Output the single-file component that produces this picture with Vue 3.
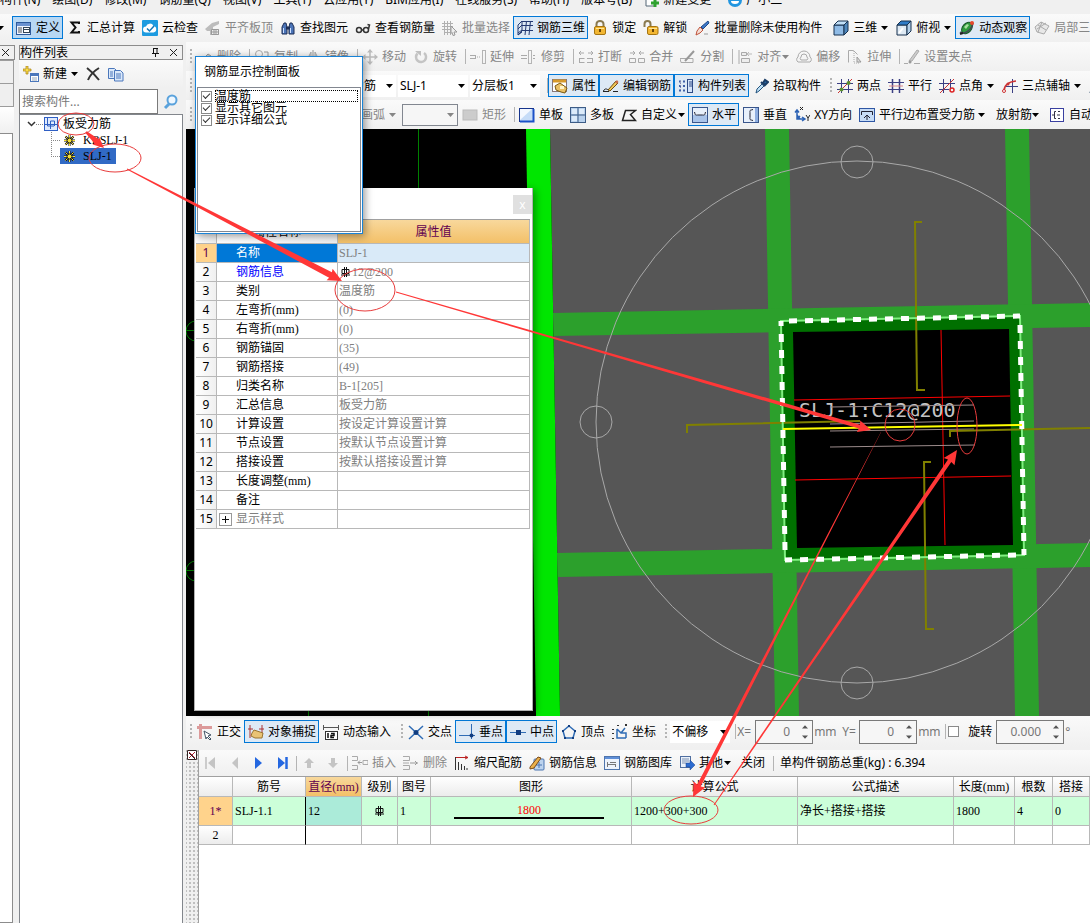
<script setup>
import { h } from 'vue'

const arrowSvg = () => h('svg', { class: 'caret', viewBox: '0 0 7 4' }, [h('path', { d: 'M0 0h7L3.5 4z' })])

const icons = {
  define: '<rect x=".5" y="2.500" width="14" height="12" fill="#eef4ff" stroke="#2d5a9c"/><path d="M1 4.500h13" stroke="#6a92d0" stroke-width="3"/><path d="M2 8h4M2 10h4M2 12h4" stroke="#555"/><rect x="7.500" y="7.500" width="6" height="5" fill="#fff" stroke="#345"/><path d="M8 9.500h5" stroke="#345"/>',
  sigma: '<path d="M12 4V2.500H4.500l4 5-4 5H12V11" fill="none" stroke="#111" stroke-width="2"/>',
  cloud: '<rect width="16" height="16" rx="1" fill="#1d9be0"/><path d="M4 12.500a3 3 0 0 1 0-6 4 4 0 0 1 7.500-.5 3.300 3.300 0 0 1 0 6.500z" fill="#fff"/><path d="M5 8.500l2.500 2.500L12 6" fill="none" stroke="#1577b8" stroke-width="1.500"/>',
  level: '<path d="M0 9l7-6 7-2v3L8 7v2h6v6H5v-4H2z" fill="#bcbcbc"/><path d="M6.500 9.500h7v5h-7zM9 10v5M11 10v5M7 12h6" fill="#eee" stroke="#999"/>',
  find: '<path d="M2 14V7l2-4h2l1 4v7zM9 14V7l1-4h2l2 4v7z" fill="#4b74b8" stroke="#1f2f55"/><path d="M6 8h4" stroke="#1f2f55" stroke-width="3"/><path d="M3.500 8v5M10.500 8v5" stroke="#cfe0ff"/>',
  glasses: '<circle cx="4" cy="10" r="2.500" fill="none" stroke="#333" stroke-width="1.500"/><circle cx="11" cy="10" r="2.500" fill="none" stroke="#333" stroke-width="1.500"/><path d="M6.500 10h2M13.500 9l1-4-2-.5" fill="none" stroke="#333" stroke-width="1.500"/>',
  batch: '<path d="M2.500 1v14M5.500 1v14M8.500 1v14M0 3.500h11M0 6.500h11M0 9.500h9M2 12.500h6" stroke="#b0b0b0"/><path d="M9 6l6 6h-3l1 3-2 .5-1-3-1 1z" fill="#eee" stroke="#999"/>',
  rebar3d: '<path d="M1 15V5l4-4v10zM1 9l4-4M5 1.500h11M5 5.500h11M5 10.500h11M1 13l4-3M9.500 1L8 15M13.500 1L12 15M1 15l4-3" fill="none" stroke="#243a72"/>',
  lock: '<path d="M4.500 7V4a3.500 3 0 0 1 7 0v3" fill="none" stroke="#8a7a50" stroke-width="2"/><rect x="2.500" y="6.500" width="11" height="8" rx="1.500" fill="#f2b632" stroke="#a67512"/><path d="M4 8.500h8" stroke="#ffe79a"/><path d="M8 9v3" stroke="#6a4508" stroke-width="2"/>',
  unlock: '<path d="M1.500 7V4a3 3 0 0 1 6 0v3" fill="none" stroke="#8a7a50" stroke-width="2"/><rect x="4.500" y="6.500" width="10.500" height="8" rx="1.500" fill="#f2b632" stroke="#a67512"/><path d="M6 8.500h8" stroke="#ffe79a"/><path d="M10 9v3" stroke="#6a4508" stroke-width="2"/>',
  brush: '<path d="M14 1L7 7l2 2 6-6z" fill="#3c78c8" stroke="#1f4b8a"/><path d="M6 7l3 3-3 3-4 2 1-4z" fill="#f4ddd4" stroke="#c0533a"/><path d="M10 14h4" stroke="#999"/>',
  cube: '<path d="M1 5h10v10H1z" fill="#8fbbe6" stroke="#16304e"/><path d="M1 5l4-4h10l-4 4z" fill="#c2e0f8" stroke="#16304e"/><path d="M11 5l4-4v10l-4 4z" fill="#4f86bb" stroke="#16304e"/>',
  cubeTop: '<path d="M1 5h10v10H1z" fill="#dfeaf4" stroke="#16304e"/><path d="M1 5l4-4h10l-4 4z" fill="#2f7cc8" stroke="#16304e"/><path d="M11 5l4-4v10l-4 4z" fill="#b4d0ea" stroke="#16304e"/><path d="M3 13l4-5" stroke="#fff" stroke-width="2"/>',
  orbit: '<ellipse cx="8" cy="8" rx="4.500" ry="6.500" transform="rotate(40 8 8)" fill="#2e9a3e" stroke="#17552a"/><path d="M5 7l3-3 2 1-3 4z" fill="#a7e0a0"/><path d="M1 12c4 3 12-2 13-9" fill="none" stroke="#445" stroke-width="1.500"/><circle cx="13" cy="3" r="2" fill="#e7482e"/><path d="M1 14l3-1" stroke="#222" stroke-width="2"/>',
  local: '<path d="M1 7l6-5 8 4-5 8-7-2zM4 5l8 5M8 2l-4 10M3 9l9-6" fill="#e8e8e8" stroke="#aaa"/>',
  erase: '<path d="M2 14l9-9 3 2-6 7z" fill="#ccc" stroke="#999"/>',
  copy2: '<circle cx="5" cy="5" r="3.500" fill="none" stroke="#aaa"/><circle cx="11" cy="11" r="3.500" fill="none" stroke="#aaa"/><path d="M10 3h4v4" fill="none" stroke="#999"/>',
  mirror: '<path d="M6 3v10H1zM10 3v10h5z" fill="#ddd" stroke="#aaa"/><path d="M8 1v14" stroke="#999"/>',
  move: '<path d="M8 2v12M2 8h12" stroke="#bbb" stroke-width="1.500"/><path d="M8 0l3 3.500H5zM8 16l3-3.500H5zM0 8l3.500-3v6zM16 8l-3.500-3v6z" fill="#bbb"/>',
  rotate: '<path d="M11 4a5 5 0 1 1-6.500.5" fill="none" stroke="#c4c4c4" stroke-width="2.500"/><path d="M2 2h6v5z" fill="#c0c0c0"/>',
  extend: '<path d="M0 6.500h6M0 9.500h6M5.500 6v4" stroke="#aaa"/><path d="M7 8h4" stroke="#aaa" stroke-dasharray="1 1"/><path d="M12.500 1v14M15.500 1v14M12 1.500h4M12 14.500h4" stroke="#b4b4b4"/>',
  trim: '<path d="M0 6.500h6M0 9.500h6M12 6.500h2M12 9.500h2" stroke="#aaa"/><path d="M7.500 1v14M10.500 1v14M7 1.500h4M7 14.500h4" stroke="#b5b5b5"/>',
  breakI: '<path d="M1 4h5M3 2L1 4l2 2M10 4h5M13 2l2 2-2 2" fill="none" stroke="#aaa"/><path d="M1 9.500h5.500M1 13.500h5.500M1.500 9v5M9 9.500h6M9 13.500h6M14.500 9v5" fill="none" stroke="#aaa"/>',
  merge: '<path d="M1 4h5M4 2l2 2-2 2M10 4h5M12 2l-2 2 2 2" fill="none" stroke="#aaa"/><path d="M.5 9.500h6v4h-6zM9.500 9.500h6v4h-6z" fill="none" stroke="#aaa"/>',
  split: '<path d="M0 9.500h13v4H1z" fill="none" stroke="#aaa"/><path d="M5 12l9-10" stroke="#999" stroke-width="2"/>',
  align: '<path d="M2 1v14" stroke="#aaa"/><path d="M4.500 3.500h5v3h-5zM4.500 9.500h8v4h-8z" fill="#eee" stroke="#aaa"/><path d="M15 5h-4M12 3l-2 2 2 2" fill="none" stroke="#bbb"/>',
  offset: '<path d="M2 13a3 3 0 0 1 0-5 6 6 0 0 1 12 0 3 3 0 0 1 0 5z" fill="none" stroke="#aaa"/><path d="M5 11a2 2 0 0 1 0-3 3 3 0 0 1 6 0 2 2 0 0 1 0 3z" fill="none" stroke="#aaa"/>',
  stretch: '<path d="M1.500 13.500v-12h5l4 4" fill="none" stroke="#aaa"/><path d="M7 2v12h6" fill="none" stroke="#aaa" stroke-dasharray="1 1"/><path d="M10 8l4 5h-4z" fill="#ddd" stroke="#999"/>',
  grips: '<path d="M0 14.500h4M10 14.500h6" stroke="#aaa"/><path d="M5 12l8-11 2 1-7 10z" fill="#ccc" stroke="#aaa"/><circle cx="6" cy="13" r="1.500" fill="#999"/>',
  props: '<rect x=".5" y="1.500" width="14" height="12" fill="#fff" stroke="#877"/><path d="M1 3h13" stroke="#d79a2b" stroke-width="3"/><path d="M3 8l5-3 7 5-2 5-4-1-5-2z" fill="#e9c066" stroke="#7b5a12"/><path d="M8 8h4v3H8z" fill="#fff4c8"/>',
  editRebar: '<path d="M0 13.500h6M10 13.500h5M0 13.500c3-5 4-1 6-2" fill="none" stroke="#222"/><path d="M5 12l8-9 2 2-8 8z" fill="#efc75a" stroke="#6e4d10"/><path d="M12 4l2 2 1.500-2-1.500-2z" fill="#c76a4b"/>',
  list: '<path d="M1 3.500h2M1 8h2M1 12.500h2M5 3.500h2M5 8h2M5 12.500h2" stroke="#4060a8" stroke-width="2"/><path d="M2.500 3v10" stroke="#88a" stroke-dasharray="1 1"/><rect x="9.500" y="1.500" width="5" height="13" fill="#d4e4fa" stroke="#2e4b86"/><path d="M11 4h3M11 6h3M11 8h3" stroke="#2e4b86"/>',
  picker: '<path d="M3 15l1-4 6-6 2 2-6 6z" fill="#bfe0f5" stroke="#23547f"/><path d="M8 4l4 4M10 5l2-3 3 2-3 3z" fill="#2a6aa8" stroke="#1c3e66" stroke-width="2"/>',
  twoPt: '<path d="M4.500 1v14M11.500 1v14M0 5.500h16M0 11.500h16" stroke="#3b3f83"/><path d="M1 15L15 1" stroke="#c33"/><circle cx="11.500" cy="5" r="2" fill="#5b8f2f"/><circle cx="4.500" cy="11.500" r="2" fill="#5b8f2f"/>',
  parallel: '<path d="M4.500 1v14M11.500 1v14" stroke="#3b3f83" stroke-width="1.500"/><path d="M0 4.500h16M0 11.500h16" stroke="#3b3f83"/><path d="M1 8h14" stroke="#d88"/>',
  ptAngle: '<path d="M4.500 1v14M11.500 1v9M0 5.500h16M0 11.500h10" stroke="#3b3f83"/><path d="M1 15L15 1" stroke="#c33"/><circle cx="13" cy="12" r="2" fill="none" stroke="#d22" stroke-width="1.500"/>',
  threePt: '<path d="M10.500 1v14M4 8.500h12" stroke="#3b3f83"/><path d="M2 13c0-6 4-9 12-10" fill="none" stroke="#c33" stroke-width="1.500"/><circle cx="2" cy="13" r="1.500" fill="#fff" stroke="#c33"/><circle cx="6" cy="6" r="1.500" fill="#c33"/>',
  slash: '<path d="M1 15L15 1" stroke="#246" stroke-width="2"/>',
  rect: '<rect x="1" y="3" width="14" height="10" fill="#ccc" stroke="#bbb"/>',
  single: '<rect x=".5" y="1.500" width="14" height="13" fill="#c6dcf8" stroke="#16348c"/><path d="M1 2h12L1 13z" fill="#f4f8ff"/><path d="M14.500 2v12.500H1" fill="none" stroke="#1a50c8" stroke-width="2"/>',
  multi: '<rect x=".5" y=".5" width="15" height="15" fill="#b9d2ee" stroke="#3d5c86"/><path d="M2 2h5v5H2zM9 2h5v5H9zM2 9h5v5H2z" fill="#dcebfa"/><path d="M8 0v16M0 8h16" stroke="#3d5c86"/>',
  custom: '<path d="M1.500 13.500l3-10h10l-5 4 5 6z" fill="none" stroke="#222" stroke-width="1.500"/>',
  horiz: '<rect x=".5" y=".5" width="15" height="15" fill="#a9c4ea" stroke="#3a568c"/><path d="M1 1h14v7H1z" fill="#e8f0fb"/><path d="M2.500 5c1 4 1 3 3 3h5c2 0 2 1 3-3" fill="none" stroke="#223"/>',
  vert: '<rect x=".5" y=".5" width="15" height="15" fill="#8faee0" stroke="#3a568c"/><path d="M1 1h11v14H1z" fill="#e8f0fb"/><path d="M10 2.500c-4 1-3 1-3 3v5c0 2-1 2 3 3" fill="none" stroke="#223"/>',
  xy: '<path d="M3 3v9h8M1 5.500L3 3l2 2.500M8 10l3 2-3 2M3 12l3-3M3 8l3 4" fill="none" stroke="#2c62b4" stroke-width="1.500"/><path d="M6 0l3 3M9 0L6 3M12 8l2 3 2-3M14 11v3" fill="none" stroke="#222"/>',
  edge: '<rect x=".5" y="1.500" width="15" height="13" fill="#c7dcf6" stroke="#2f57a4"/><path d="M2.500 8V4.500h11V8" fill="none" stroke="#223"/><path d="M8 13V8M5 11l3-3 3 3" fill="none" stroke="#223"/>',
  auto: '<rect x="1.500" y="1.500" width="13" height="13" fill="#fff" stroke="#3a40a0"/><path d="M7 4.500H5.500v7H7M9 4.500h2M9 11.500h2M3 8h3M8 8h3" fill="none" stroke="#334"/>',
  ortho: '<path d="M3.500 0v15M0 3.500h15" stroke="#dc9a9a" stroke-width="3"/><path d="M7 7l7 4-3 1 3 3-1 1-3-3-1 2z" fill="#fff" stroke="#456"/>',
  snap: '<path d="M2 1v13M14 1v8M0 5h5M11 5h5" stroke="#a33"/><path d="M4 9l2-3 3 1 6 2-1 5H7l-4-2z" fill="#e9c374" stroke="#9a7430"/>',
  dynIn: '<path d="M0 3.500h16M.5 1v5M15.500 1v5" stroke="#555"/><rect x="2.500" y="7.500" width="12" height="8" fill="#fff" stroke="#333"/><path d="M5 9v5M8 9.500h3v2H8v2h3" fill="none" stroke="#111" stroke-width="1.500"/>',
  cross: '<path d="M1 2l14 13M15 2L1 15" stroke="#2f6cb5" stroke-width="1.500"/><circle cx="8" cy="8.500" r="2.500" fill="#103c80"/>',
  perp: '<path d="M0 11.500h16M12.500 0v15" stroke="#2f6cb5"/><circle cx="12.500" cy="11.500" r="2" fill="#103c80"/>',
  mid: '<path d="M0 8.500h16" stroke="#2f6cb5"/><rect x="6" y="6" width="5" height="5" fill="#103c80"/>',
  vertex: '<path d="M8 2l6 5-2 7H4L2 7z" fill="none" stroke="#2f6cb5" stroke-width="1.500"/><path d="M7 1h2v2H7zM1 6h2v2H1zM13 6h2v2h-2zM3 13h2v2H3zM11 13h2v2h-2z" fill="#123e80"/>',
  coord: '<path d="M5 5v9h9M5 5l4 4h5v5M9 9l4-5" fill="none" stroke="#2f6cb5" stroke-width="1.500"/><path d="M0 5.500h2M0 9.500h2M0 14.500h2M5 1.500h2M13 0l2 2M15 0l-2 2" stroke="#333"/>',
  first: '<path d="M3 2v12" stroke="#ccc" stroke-width="2"/><path d="M12 2v12L5 8z" fill="#c4c4c4"/>',
  prev: '<path d="M11 2v12L5 8z" fill="#c4c4c4"/>',
  next: '<path d="M4 2v12l7-6z" fill="#2467e0"/>',
  last: '<path d="M3 2v12l7-6z" fill="#2467e0"/><path d="M11.500 2v12" stroke="#2467e0" stroke-width="2.500"/>',
  up: '<path d="M8 3l5 5h-3v5H6V8H3z" fill="#c4c4c4"/>',
  down: '<path d="M8 13l5-5h-3V3H6v5H3z" fill="#c4c4c4"/>',
  insert: '<path d="M0 1.500h5.500v4H0M0 10.500h5.500v4H0M11 5.500h5v4h-5z" fill="none" stroke="#aaa"/><path d="M10 7.500H6M8 5.500l-2 2 2 2" fill="none" stroke="#999"/>',
  remove: '<path d="M0 1.500h6.500v4H0M0 10.500h6.500v4H0M0 8h6" fill="none" stroke="#aaa"/><path d="M7 8h8M12 6l2 2-2 2" fill="none" stroke="#999"/>',
  scale: '<path d="M1.500 2v13M4.500 7v8M7.500 9v6M10.500 11v4M13 13v2" stroke="#333"/><path d="M2 2.500h12M11 1l3 1.500L11 4" fill="none" stroke="#b22"/>',
  info: '<rect x="5" y="4" width="10" height="11" rx="1" fill="#bcd3ee" stroke="#4a74b0"/><path d="M7 10h6M10 7v6" stroke="#4a74b0"/><path d="M1 12l8-10 3 1-7 10-4 1z" fill="#eab04c" stroke="#7a4a18"/>',
  lib: '<rect x=".5" y="1.500" width="15" height="13" fill="#eef3fb" stroke="#4f75ad"/><path d="M1 3h14" stroke="#5f8fd8" stroke-width="2"/><path d="M3.500 7v5M3 9.500h9M11.500 9v3M6 7.500h6" stroke="#777"/>',
  other: '<rect x="1.500" y="1.500" width="10" height="11" fill="#eaf1fa" stroke="#4f6ea0"/><path d="M3 4h7M3 6h7M3 8h4" stroke="#7a8fb0"/><path d="M7 8h4V5l5 5-5 5v-3H7z" fill="#2c6bd0" stroke="#17428c" stroke-width=".5"/>',
}

const Tools = ({ items }) => items.map((it) => {
  const w = it.w ? { width: it.w + 'px' } : null
  if (it.k === 'sep') return h('span', { class: 'sep', style: w })
  if (it.k === 'grip') return h('span', { class: 'grip' })
  if (it.k === 'gap') return h('span', { class: 'gap', style: w })
  if (it.k === 'label') return h('span', { class: ['cap', it.dark && 'dark'], style: w }, it.t)
  if (it.k === 'check') return h('label', { class: 'rot' }, [h('input', { type: 'checkbox', class: 'box' }), it.t])
  if (it.k === 'select')
    return h('span', { class: ['combo', it.line && 'line'], style: w }, [
      h('select', { 'aria-label': it.n }, [h('option', it.t)]), arrowSvg(),
    ])
  if (it.k === 'num')
    return h('span', { class: 'num', style: w }, [
      h('input', { type: 'text', value: it.t, 'aria-label': it.n }),
      h('svg', { viewBox: '0 0 7 16' }, [h('path', { d: 'M0 4h7L3.500 0zM0 12h7L3.500 16z' })]),
    ])
  return h('button', { type: 'button', class: ['tool', it.on && 'on', it.off && 'off', !it.t && 'bare'], 'aria-label': it.t || it.n }, [
    it.i && h('svg', { class: 'ic', viewBox: '0 0 16 16', innerHTML: icons[it.i] }),
    it.t && h('span', it.t),
    it.a && h('span', { class: ['drop', it.a] }, [arrowSvg()]),
  ])
})
Tools.props = ['items']

const b = (i, t, o = {}) => ({ i, t, ...o })
const off = { off: true }
const on = { on: true }
const sep = { k: 'sep' }
const grip = { k: 'grip' }
const gap = (w) => ({ k: 'gap', w })

const menus = ['构件(N)', '绘图(D)', '修改(M)', '钢筋量(Q)', '视图(V)', '工具(T)', '云应用(Y)', 'BIM应用(I)', '在线服务(S)', '帮助(H)', '版本号(B)']

const mainBar = [
  b('define', '定义', on), b('sigma', '汇总计算'), b('cloud', '云检查'), b('level', '平齐板顶', off), b('find', '查找图元'),
  b('glasses', '查看钢筋量'), b('batch', '批量选择', off), b('rebar3d', '钢筋三维', on), b('lock', '锁定'), b('unlock', '解锁'),
  b('brush', '批量删除未使用构件'), gap(4), b('cube', '三维', { a: 'split' }), b('cubeTop', '俯视', { a: 'split' }),
  b('orbit', '动态观察', on), b('local', '局部三维', off),
]
const bars = [
  [grip, b('erase', '删除', off), sep, b('copy2', '复制', off), b('mirror', '镜像', off), sep, b('move', '移动', off), b('rotate', '旋转', off), sep,
    b('extend', '延伸', off), b('trim', '修剪', off), sep, b('breakI', '打断', off), b('merge', '合并', off), b('split', '分割', off), sep,
    b('align', '对齐', { off: true, a: 'tight' }), b('offset', '偏移', off), b('stretch', '拉伸', off), sep, b('grips', '设置夹点', off)],
  [grip, { k: 'select', t: '首层', w: 62, n: '楼层' }, { k: 'select', t: '板', w: 64, n: '分类' }, { k: 'select', t: '板受力筋', w: 70, n: '类型' },
    { k: 'select', t: 'SLJ-1', w: 70, n: '构件' }, { k: 'select', t: '分层板1', w: 70, n: '分层' }, { k: 'sep', w: 8 },
    b('props', '属性', on), b('editRebar', '编辑钢筋', on), b('list', '构件列表', on), b('picker', '拾取构件'), gap(2), grip,
    b('twoPt', '两点'), b('parallel', '平行'), b('ptAngle', '点角', { a: 'split' }), b('threePt', '三点辅轴', { a: 'split' }), b('slash', '删除辅轴')],
  [grip, gap(93), b('slash', '直线', off), b('slash', '画弧', { off: true, a: 'split' }), { k: 'select', t: '', w: 56, n: '方式', line: true },
    b('rect', '矩形', off), sep, b('single', '单板'), b('multi', '多板'), b('custom', '自定义', { a: 'tight' }), b('horiz', '水平', on), b('vert', '垂直'),
    b('xy', 'XY方向'), b('edge', '平行边布置受力筋', { a: 'split' }), gap(2), b('', '放射筋', { a: 'tight' }), gap(2), b('auto', '自动配筋')],
]
const snapBar = [
  grip, b('ortho', '正交'), b('snap', '对象捕捉', on), b('dynIn', '动态输入'), gap(3), grip, b('cross', '交点'), b('perp', '垂点', on), b('mid', '中点', on),
  b('vertex', '顶点'), b('coord', '坐标'), gap(2), grip, { k: 'select', t: '不偏移', w: 60, n: '偏移方式' }, sep,
  { k: 'label', t: 'X=', w: 19 }, { k: 'num', t: '0', w: 58, n: 'X' }, { k: 'label', t: 'mm', w: 28 }, { k: 'label', t: 'Y=', w: 18 },
  { k: 'num', t: '0', w: 58, n: 'Y' }, { k: 'label', t: 'mm', w: 23 }, sep, { k: 'check', t: '旋转' }, { k: 'num', t: '0.000', w: 68, n: '角度' }, { k: 'label', t: '°' },
]
const editBar = [
  b('first', '', { off: true, n: '首条' }), b('prev', '', { off: true, n: '上一条' }), b('next', '', { n: '下一条' }), b('last', '', { n: '末条' }), { k: 'sep', w: 2 },
  b('up', '', { off: true, n: '上移' }), b('down', '', { off: true, n: '下移' }), { k: 'sep', w: 3 }, b('insert', '插入', off), b('remove', '删除', off),
  b('scale', '缩尺配筋'), b('info', '钢筋信息'), b('lib', '钢筋图库'), b('other', '其他', { a: 'tight' }), gap(3), b('', '关闭'), sep, gap(5),
  { k: 'label', t: '单构件钢筋总重(kg) : 6.394', dark: true },
]

const props = [
  ['名称', 'SLJ-1'], ['钢筋信息', '12@200'], ['类别', '温度筋'], ['左弯折(mm)', '(0)'], ['右弯折(mm)', '(0)'], ['钢筋锚固', '(35)'], ['钢筋搭接', '(49)'],
  ['归类名称', 'B-1[205]'], ['汇总信息', '板受力筋'], ['计算设置', '按设定计算设置计算'], ['节点设置', '按默认节点设置计算'], ['搭接设置', '按默认搭接设置计算'],
  ['长度调整(mm)', ''], ['备注', ''], ['显示样式', ''],
]
const displayOptions = ['温度筋', '显示其它图元', '显示详细公式']
const cols = [34, 73, 56, 36, 33, 201, 166, 156, 61, 38, 0]
const heads = ['', '筋号', '直径(mm)', '级别', '图号', '图形', '计算公式', '公式描述', '长度(mm)', '根数', '搭接']

const pointer = ([x1, y1, x2, y2, start, w, head]) => {
  const l = Math.hypot(x2 - x1, y2 - y1)
  const ux = (x2 - x1) / l
  const uy = (y2 - y1) / l
  const at = (d, s) => `${(x1 + ux * d - uy * s).toFixed(1)},${(y1 + uy * d + ux * s).toFixed(1)}`
  const n = l - head
  return [at(0, start), at(n, w), at(n - 1, head / 2), at(l, 0), at(n - 1, -head / 2), at(n, -w), at(0, -start)].join(' ')
}
const pointers = [
  [86, 132, 104, 148, 1, 3, 10], [127, 169, 342, 281, 0.5, 3, 13], [396, 292, 871, 430, 0.5, 2, 12], [881, 432, 693, 797, 0.1, 2, 13], [714, 805, 957, 450, 0.5, 2, 13],
].map(pointer)
const rings = [[76, 124, 18, 11], [115, 158, 26, 14], [365, 290, 30, 21], [900, 425, 15, 16], [967, 426, 10, 28], [691, 810, 27, 14]]
</script>

<template>
  <div class="app">
    <nav class="menu">
      <a v-for="m in menus" :key="m" href="#">{{ m }}</a>
      <a href="#"><svg class="ic" viewBox="0 0 16 16"><path d="M2 1h9v13H2z" fill="#fff" stroke="#567" /><path d="M11 7v8M7 11h8" stroke="#2fa12f" stroke-width="3" /></svg>新建变更</a>
      <a href="#" class="user"><svg class="ic" viewBox="0 0 16 16"><circle cx="8" cy="8" r="7" fill="#2296e0" /><path d="M4 9a4 3 0 0 0 8 0" fill="#fff" /></svg>广小二</a>
    </nav>
    <div class="bar top"><svg class="caret" viewBox="0 0 7 4"><path d="M0 0h7L3.500 4z" /></svg><Tools :items="mainBar" /></div>

    <div class="body">
      <aside class="strip">
        <div class="strip-title"><svg viewBox="0 0 9 9"><path d="M1 1l7 7M8 1L1 8" stroke="#222" fill="none" /></svg></div>
        <div class="cell"></div><div class="cell"></div><div class="cell light"></div><div class="rest"></div>
      </aside>

      <aside class="panel">
        <header class="panel-title">
          <span>构件列表</span>
          <button type="button" aria-label="固定"><svg viewBox="0 0 9 9"><path d="M2.500 0v5M6 0v5M2 .5h5M1 5.500h7M4.500 6v3" stroke="#111" fill="none" /></svg></button>
          <button type="button" aria-label="关闭"><svg viewBox="0 0 9 9"><path d="M1 1l7 7M8 1L1 8" stroke="#222" fill="none" /></svg></button>
        </header>
        <div class="panel-tools">
          <button type="button"><svg class="ic" viewBox="0 0 16 16"><path d="M3 0h2v3h3v2H5v3H3V5H0V3h3z" fill="#f8dc4a" stroke="#a67c10" stroke-width=".7" /><rect x="7.500" y="7.500" width="8" height="8" fill="#fff" stroke="#4b77bb" /><path d="M8 9h7" stroke="#4b77bb" stroke-width="2" /><path d="M9 12h5M9 14h5" stroke="#9ab" /></svg>新建<svg class="caret" viewBox="0 0 7 4"><path d="M0 0h7L3.500 4z" /></svg></button>
          <button type="button" aria-label="删除"><svg class="ic" viewBox="0 0 16 16"><path d="M2 2c4 3 8 7 12 12M14 2C9 5 5 9 3 14" stroke="#333" stroke-width="2" fill="none" /></svg></button>
          <button type="button" aria-label="复制"><svg class="ic" viewBox="0 0 16 16"><path d="M.5 2.500h6l2 2v8h-8z" fill="#dbe9fb" stroke="#4b77bb" /><path d="M6.500 4.500h6l2.500 2.500v8H6.500z" fill="#dbe9fb" stroke="#4b77bb" /><path d="M8 8h5M8 10h5M8 12h5M2 6h3M2 8h3M2 10h3" stroke="#4b77bb" /></svg></button>
        </div>
        <div class="search">
          <input type="text" placeholder="搜索构件..." aria-label="搜索构件">
          <button type="button" aria-label="搜索"><svg class="ic" viewBox="0 0 16 16"><circle cx="9" cy="6" r="4.500" fill="#eef7ff" stroke="#5aa2dc" stroke-width="2" /><path d="M6 10l-4 4" stroke="#5aa2dc" stroke-width="3" /></svg></button>
        </div>
        <ul class="tree">
          <li class="parent"><svg class="fold" viewBox="0 0 9 6"><path d="M1 1l3.500 3.500L8 1" fill="none" stroke="#333" stroke-width="1.500" /></svg><span class="dots"></span><svg class="ic" viewBox="0 0 16 16"><rect x="1.500" y="1.500" width="13" height="13" fill="#dfeafd" stroke="#2f5fc4" /><path d="M4.500 2v8h3M7.500 13V5h4v5M2 8.500h12M11 10H8" stroke="#2f5fc4" fill="none" /></svg><span>板受力筋</span></li>
          <li v-for="(n, i) in ['KBSLJ-1', 'SLJ-1']" :key="n" class="leaf"><span class="branch"></span><span class="node" :class="{ sel: i === 1 }"><svg class="gear" viewBox="0 0 11 11"><path d="M5.500 0v11M0 5.500h11M1.500 1.500l8 8M9.500 1.500l-8 8" stroke="#111" stroke-width="2" /><path d="M5.500 0v11M0 5.500h11M1.500 1.500l8 8M9.500 1.500l-8 8" stroke="#f7e23a" /><circle cx="5.500" cy="5.500" r="2.500" fill="#f7e23a" stroke="#111" /></svg>{{ n }}</span></li>
        </ul>
      </aside>

      <main class="work">
        <div v-for="(r, i) in bars" :key="i" class="bar"><Tools :items="r" /></div>
        <svg class="scene">
          <g transform="translate(-186 -129)">
            <path d="M550 129H2400V2000H582z" fill="#565656" />
            <path d="M526 129h24l32 1871h-24z" fill="#00e600" />
            <g fill="#2ca02c">
              <path d="M765 129h24l32 1871h-24zM1005 129h24l32 1871h-24z" />
              <path d="M553 313L1090 303V327L554 336zM557 553L1090 543V567L558 577z" />
            </g>
            <path d="M781 321L1020 316 1024 555 785 560z" fill="#007000" />
            <path d="M793 332L1009 329 1013 545 797 548z" fill="#000" />
            <g fill="none" stroke="#008000"><path d="M418.500 129v60M308.500 705v300M428.500 705v300M186 330.500h10M186 570.500h10" /><circle cx="196" cy="331" r="10" /><circle cx="196" cy="571" r="10" /></g>
            <g fill="none" stroke="#a8a8a8"><circle cx="857" cy="422" r="261" /><circle cx="857" cy="162" r="16" /><circle cx="596" cy="422" r="16" /><circle cx="857" cy="683" r="16" /></g>
            <path d="M941 330L945 545M794 400L1010 396M795 480L1011 476" stroke="#f00" />
            <text x="799" y="417" class="tag">SLJ-1:C12@200</text>
            <path d="M830 407L974 405M830 424L974 421M830 431L974 429M830 447L975 445" stroke="#9c8c8c" />
            <path d="M922 222h-7L917 390h8M931 462h-7L926 629h8M687 433v-8L860 421M950 437v-6L1090 428" fill="none" stroke="#808000" stroke-width="2" />
            <path d="M781 321L1020 316 1024 555 785 560z" fill="none" stroke="#80f080" stroke-width="2" />
            <path d="M789 321L1020 316M1020 325L1024 555M1016 555L785 560M785 550L781 321" fill="none" stroke="#fff" stroke-width="5" stroke-dasharray="8 8" />
            <path d="M783 429L1022 425" stroke="#ff0" stroke-width="2" />
          </g>
        </svg>
        <div class="bar snap"><Tools :items="snapBar" /></div>
        <section class="editor">
          <div class="handle"><svg viewBox="0 0 10 10"><path d="M.5.5h9v9h-9z" fill="#fff" stroke="#322" /><path d="M2 2l6 6M8 2L2 8" stroke="#a23" /><path d="M2 3l6 6" stroke="#222" /></svg></div>
          <div class="sheet">
            <div class="bar edit"><Tools :items="editBar" /></div>
            <table class="grid">
              <colgroup><col v-for="(c, i) in cols" :key="i" :style="c ? { width: c + 'px' } : null"></colgroup>
              <thead><tr><th v-for="(t, i) in heads" :key="i" :class="{ hot: i === 2 }">{{ t }}</th></tr></thead>
              <tbody>
                <tr class="active">
                  <th>1*</th><td>SLJ-1.1</td><td class="cur">12</td>
                  <td class="mid"><svg class="phi" viewBox="0 0 9 10"><path d="M3.500 0v10M5.500 0v10M1 2.500h7v4H1zM0 8h9" fill="none" stroke="#111" /></svg></td>
                  <td>1</td><td class="shape"><span>1800</span></td><td>1200+300+300</td><td>净长+搭接+搭接</td><td>1800</td><td>4</td><td>0</td>
                </tr>
                <tr><th>2</th><td></td><td class="cur"></td><td v-for="n in 8" :key="n"></td></tr>
              </tbody>
            </table>
          </div>
        </section>
      </main>
    </div>

    <section class="props">
      <header><button type="button" aria-label="关闭">x</button></header>
      <table>
        <colgroup><col class="c1"><col class="c2"><col></colgroup>
        <thead><tr><th></th><th>属性名称</th><th class="hot">属性值</th></tr></thead>
        <tbody>
          <tr v-for="(p, i) in props" :key="p[0]" :class="{ first: i === 0, link: i === 1, last: i === 14 }">
            <th>{{ i + 1 }}</th>
            <td><button v-if="i === 14" type="button" class="plus" aria-label="展开"><svg viewBox="0 0 11 11"><path d="M2 5.500h7M5.500 2v7" stroke="#111" /></svg></button><span>{{ p[0] }}</span></td>
            <td><svg v-if="i === 1" class="phi" viewBox="0 0 9 10"><path d="M3.500 0v10M5.500 0v10M1 2.500h7v4H1zM0 8h9" fill="none" stroke="#111" /></svg>{{ p[1] }}</td>
          </tr>
        </tbody>
      </table>
    </section>

    <section class="display">
      <h2>钢筋显示控制面板</h2>
      <div class="options">
        <label v-for="(o, i) in displayOptions" :key="o"><input type="checkbox" checked class="box"><span :class="{ focus: i === 0 }">{{ o }}</span></label>
      </div>
    </section>

    <svg class="marks">
      <polygon v-for="p in pointers" :key="p" :points="p" fill="#ff3737" />
      <ellipse v-for="r in rings" :key="r[0]" :cx="r[0]" :cy="r[1]" :rx="r[2]" :ry="r[3]" fill="none" stroke="#e83c3c" />
    </svg>
  </div>
</template>

<style>
html, body { margin: 0; background: #f0f0f0; overflow: hidden; }
</style>

<style scoped>
.app { position: relative; display: flex; flex-direction: column; height: 100vh; overflow: hidden; background: #f0f0f0; color: #000; font: 12px/16px "Noto Sans", "Noto Sans CJK SC", sans-serif; }
.app :deep(*) { box-sizing: border-box; }
.app :deep(button) { font: inherit; color: inherit; background: none; border: 0; padding: 0; display: flex; align-items: center; }
.app :deep(input), .app :deep(select) { font: inherit; margin: 0; border-radius: 0; }
.app :deep(.ic) { width: 16px; height: 16px; flex: none; }
.app :deep(.caret) { width: 7px; height: 4px; flex: none; }

.menu { display: flex; align-items: flex-end; gap: 12px; height: 14px; padding: 0 0 6px; flex: none; white-space: nowrap; }
.menu a { display: flex; align-items: center; gap: 3px; color: #000; text-decoration: none; }
.menu .user { margin-left: 4px; }

.bar { display: flex; align-items: center; height: 29px; flex: none; overflow: hidden; background: linear-gradient(#fafafa, #f0f0f0); }
.bar.top { height: 27px; margin-bottom: 1px; }
.bar.top > .caret { margin: 0 8px 0 -3px; }
.bar.snap { height: 31px; margin-bottom: 3px; }
.bar.edit { height: 26px; }
.bar :deep(.tool) { height: 23px; flex: none; gap: 4px; padding: 0 2px 0 3px; border: 1px solid transparent; white-space: nowrap; }
.bar :deep(.tool.on) { border-color: #0078d7; background: #dde9f5; }
.bar.top :deep(.tool.on:first-of-type) { background: #b8d8f4; }
.bar :deep(.tool.off) { color: #868686; fill: #868686; }
.bar :deep(.tool.bare) { width: 24px; }
.bar :deep(.drop) { display: flex; align-items: center; justify-content: center; margin-left: -4px; width: 12px; }
.bar :deep(.drop.split) { padding-left: 2px; }
.bar :deep(.drop.tight) { width: 8px; }
.bar :deep(.sep) { width: 6px; height: 15px; flex: none; border-right: 1px solid #b4b4b4; }
.bar :deep(.gap) { flex: none; }
.bar :deep(.grip) { width: 7px; height: 15px; flex: none; background: linear-gradient(#b4b4b4 2px, transparent 2px) 4px 0 / 2px 4px repeat-y; }
.bar :deep(.combo) { position: relative; display: flex; align-items: center; height: 22px; margin-left: 2px; flex: none; background: #fff; }
.bar :deep(.combo:nth-child(4)) { margin-left: 3px; }
.bar :deep(.combo select) { appearance: none; width: 100%; height: 100%; padding: 0 14px 0 2px; border: 0; background: transparent; color: #000; }
.bar :deep(.combo .caret) { position: absolute; right: 3px; }
.bar :deep(.combo.line) { border: 1px solid #828790; background: #f6f6f6; fill: #868686; }
.bar :deep(.num) { display: flex; align-items: center; height: 24px; flex: none; padding-right: 4px; border: 1px solid #7a7a7a; background: #f6f6f6; }
.bar :deep(.num input) { flex: 1; min-width: 0; padding: 0 12px 0 0; border: 0; background: none; color: #777; text-align: right; }
.bar :deep(.num svg) { width: 6px; height: 16px; fill: #555; flex: none; }
.bar :deep(.cap) { flex: none; padding-left: 1px; color: #777; white-space: nowrap; }
.bar :deep(.cap.dark) { color: #000; }
.bar :deep(.rot) { display: flex; align-items: center; gap: 9px; padding: 0 4px 0 2px; flex: none; }
.app :deep(.box) { appearance: none; width: 11px; height: 11px; flex: none; border: 1px solid #8a8a8a; background: #fff; }

.body { display: flex; flex: 1; min-height: 0; }
.strip { display: flex; flex-direction: column; width: 15px; flex: none; padding-top: 3px; }
.strip-title { height: 15px; border: 1px solid #8c8c8c; border-left: 0; padding: 2px 0 0 1px; }
.strip-title svg { width: 9px; height: 9px; display: block; }
.cell { height: 23px; margin-right: 1px; border: 1px solid #9c9c9c; border-left: 0; border-bottom: 0; background: #efefef; }
.cell.light { height: 27px; border-right: 0; background: linear-gradient(#fff, #f0f0f0); }
.rest { flex: 1; margin-right: 2px; border: 1px solid #8c8c8c; border-left: 0; background: #fff; }

.panel { display: flex; flex-direction: column; width: 164px; flex: none; margin: 3px 3px 0 4px; }
.panel-title { display: flex; align-items: center; gap: 9px; height: 15px; padding: 0 4px 0 0; border: 1px solid #8c8c8c; line-height: 13px; }
.panel-title span { flex: 1; }
.panel-title svg { width: 9px; height: 9px; display: block; }
.panel-tools { display: flex; align-items: center; gap: 7px; height: 28px; padding-left: 4px; background: linear-gradient(#fafafa, #f0f0f0); }
.panel-tools button { gap: 4px; }
.search { display: flex; height: 25px; margin-top: 1px; }
.search input { width: 139px; padding: 0 2px; border: 1px solid #7a7a7a; background: #fff; }
.search input::placeholder { color: #777; opacity: 1; }
.search button { flex: 1; justify-content: center; }
.tree { flex: 1; margin: 0; padding: 1px 0 0 7px; list-style: none; border: 1px solid #82868c; border-bottom: 0; background: #fff; font-family: "Liberation Serif", "Noto Sans CJK SC", serif; }
.tree li { display: flex; align-items: center; height: 16px; }
.fold { width: 9px; height: 6px; }
.dots { width: 7px; height: 1px; border-top: 1px dotted #888; }
.parent span:last-child { padding-left: 4px; }
.branch { align-self: flex-start; width: 9px; height: 9px; margin-left: 24px; border-left: 1px dotted #888; border-bottom: 1px dotted #888; }
.leaf:last-child .branch { height: 25px; margin-top: -16px; }
.node { display: flex; align-items: center; gap: 8px; height: 16px; padding: 0 4px; }
.node.sel { background: #316ac5; }
.gear { width: 11px; height: 11px; }

.work { display: flex; flex-direction: column; flex: 1; min-width: 0; }
.scene { flex: 1; width: 100%; min-height: 0; background: #000; }
.tag { font: 20px "DejaVu Sans Mono", monospace; fill: #c4c4c4; }
.editor { display: flex; height: 173px; flex: none; }
.handle { width: 12px; flex: none; background: radial-gradient(circle at 1px 1px, #c0c0c0 1px, transparent 1px) 3px 12px / 4px 4px; }
.handle svg { width: 10px; height: 10px; display: block; margin-left: 1px; background: #f0f0f0; }
.sheet { flex: 1; min-width: 0; background: #fff; border-left: 1px solid #a0a0a0; overflow: hidden; }
.grid { width: 100%; table-layout: fixed; border-collapse: separate; border-spacing: 0; border-top: 1px solid #a0a0a0; font-family: "Liberation Serif", "Noto Sans CJK SC", serif; white-space: nowrap; }
.grid th, .grid td { padding: 0 2px; border-right: 1px solid #b8b8b8; border-bottom: 1px solid #b8b8b8; font-weight: 400; text-align: left; }
.grid th { padding: 0; text-align: center; background: linear-gradient(#fff, #ececec); }
.grid thead th { height: 20px; }
.grid tbody tr { height: 19px; }
.grid tbody tr.active { height: 29px; }
.grid .active td { background: #ccffd9; }
.grid .active th { background: #ffd38c; color: #600050; }
.grid th.hot { background: linear-gradient(#f8d89c, #f3c068); color: #600050; }
.grid .active td.cur { background: #abebd9; }
.grid td:nth-child(2) { border-right-color: #000; }
.grid td.mid, .grid td.shape { text-align: center; }
.shape span { display: block; margin: 0 25px 0 21px; border-bottom: 2px solid #000; color: #f00; line-height: 13px; }
.phi { width: 9px; height: 10px; vertical-align: -1px; }

.props { position: absolute; left: 194px; top: 188px; width: 339px; height: 523px; background: #fff; border: 1px solid #b0b0b0; border-top: 0; box-shadow: 2px 2px 8px rgba(0, 0, 0, .4); }
.props header { display: flex; justify-content: flex-end; height: 31px; padding: 7px 0 0; }
.props header button { width: 19px; height: 19px; justify-content: center; background: #e0e0e0; color: #fff; }
.props table { width: 334px; margin-left: 1px; table-layout: fixed; border-collapse: separate; border-spacing: 0; border-top: 1px solid #a0a0a0; font-family: "Liberation Serif", "Noto Sans CJK SC", serif; }
.c1 { width: 21px; }
.c2 { width: 121px; }
.props th, .props td { height: 19px; padding: 0 0 0 1px; border-right: 1px solid #b8b8b8; border-bottom: 1px solid #b8b8b8; font-weight: 400; text-align: left; line-height: 16px; color: #808080; white-space: nowrap; }
.props th { padding: 0; text-align: center; color: #000; background: linear-gradient(90deg, #fff, #f0f0f0); font-family: "Noto Sans", "Noto Sans CJK SC", sans-serif; }
.props thead th { height: 24px; }
.props th.hot { background: linear-gradient(#f8d89c, #f3c068); color: #600050; }
.props td:nth-child(2) { position: relative; padding-left: 19px; color: #000; }
.props .first th { background: #ffd38c; color: #600050; }
.props .first td { background: #d9eaf8; }
.props .first td:nth-child(2) { background: #0078d7; color: #fff; }
.props .link td:nth-child(2) { color: #00f; }
.props .last td:nth-child(2) { color: #808080; }
.props .phi { margin: 0 2px; }
.props .plus { position: absolute; left: 2px; top: 3px; width: 13px; height: 13px; border: 1px solid #999; }
.plus svg { width: 11px; height: 11px; }

.display { position: absolute; left: 195px; top: 56px; width: 168px; height: 178px; padding: 0 1px 1px; background: #fff; border: 1px solid #1883d7; box-shadow: 2px 2px 8px rgba(0, 0, 0, .4); display: flex; flex-direction: column; }
.display h2 { margin: 0; padding: 0 7px; font-size: 12px; font-weight: 400; line-height: 30px; }
.options { flex: 1; padding: 2px 2px 0 3px; border: 1px solid #828790; }
.options label { display: flex; align-items: center; gap: 3px; height: 12px; line-height: 12px; }
.options span { flex: 1; height: 12px; line-height: 12px; }
.options .focus { outline: 1px dotted #000; outline-offset: -1px; }
.options .box { position: relative; }
.options .box:checked::after { content: ""; position: absolute; left: 1px; top: 1px; width: 6px; height: 3px; border: solid #333; border-width: 0 0 1px 1px; transform: rotate(-45deg); }

.marks { position: absolute; inset: 0; width: 100%; height: 100%; pointer-events: none; }
</style>
